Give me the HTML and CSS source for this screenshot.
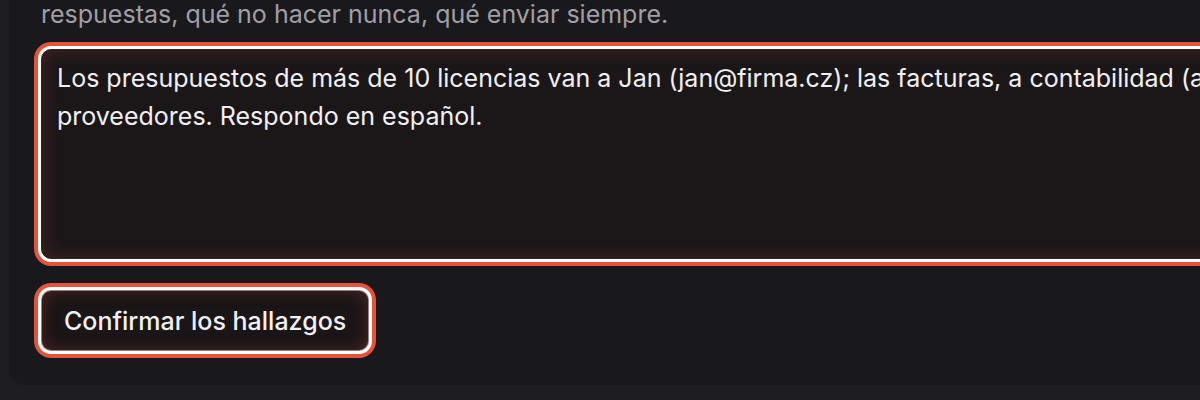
FILE: index.html
```html
<!DOCTYPE html>
<html lang="es">
<head>
<meta charset="utf-8">
<title>Confirmar</title>
<link rel="stylesheet" href="styles.css">
</head>
<body>
<div class="page">
  <section class="card">
    <p class="hint">respuestas, qué no hacer nunca, qué enviar siempre.</p>
    <textarea class="notes" spellcheck="false">Los presupuestos de más de 10 licencias van a Jan (jan@firma.cz); las facturas, a contabilidad (a
proveedores. Respondo en español.</textarea>
    <div class="actions">
      <button class="confirm" type="button">Confirmar los hallazgos</button>
    </div>
  </section>
</div>
</body>
</html>
```

FILE: styles.css
```css
html, body {
  margin: 0;
  padding: 0;
  background: #1e1d22;
  overflow: hidden;
  height: 400px;
}

.page {
  padding-left: 9px;
  width: 1600px;
}

.card {
  margin-top: -20px;
  background: #19181c;
  border-radius: 0 0 0 16px;
  padding: 15px 32px 34px 32px;
  display: flex;
  flex-direction: column;
  font-family: Inter, "Noto Sans", sans-serif;
}

.hint {
  margin: 0;
  color: #a19fa6;
  font-size: 25px;
  line-height: 38px;
}

.notes {
  margin-top: 16px;
  box-sizing: border-box;
  width: 1400px;
  height: 210px;
  resize: none;
  background: #1b1719;
  color: #f2f0f2;
  font-family: Inter, "Noto Sans", sans-serif;
  font-size: 25px;
  line-height: 38px;
  padding: 9px 15px;
  border: 1px solid #2c2528;
  border-radius: 10px;
  outline: none;
  overflow: hidden;
  box-shadow: 0 0 0 3px #ffffff, 0 0 0 7px #e4533a, inset 0 0 18px rgba(220, 80, 60, 0.22);
}

.actions {
  margin-top: 31px;
  display: flex;
}

.confirm {
  height: 61px;
  padding: 0 22px;
  background: #1a1517;
  color: #f2f0f2;
  font-family: Inter, "Noto Sans", sans-serif;
  font-size: 25px;
  font-weight: 500;
  border: 1px solid rgba(255, 215, 215, 0.55);
  border-radius: 10px;
  box-shadow: 0 0 0 3px #ffffff, 0 0 0 7px #e4533a, inset 0 0 16px rgba(220, 80, 60, 0.28);
  cursor: pointer;
}
```
